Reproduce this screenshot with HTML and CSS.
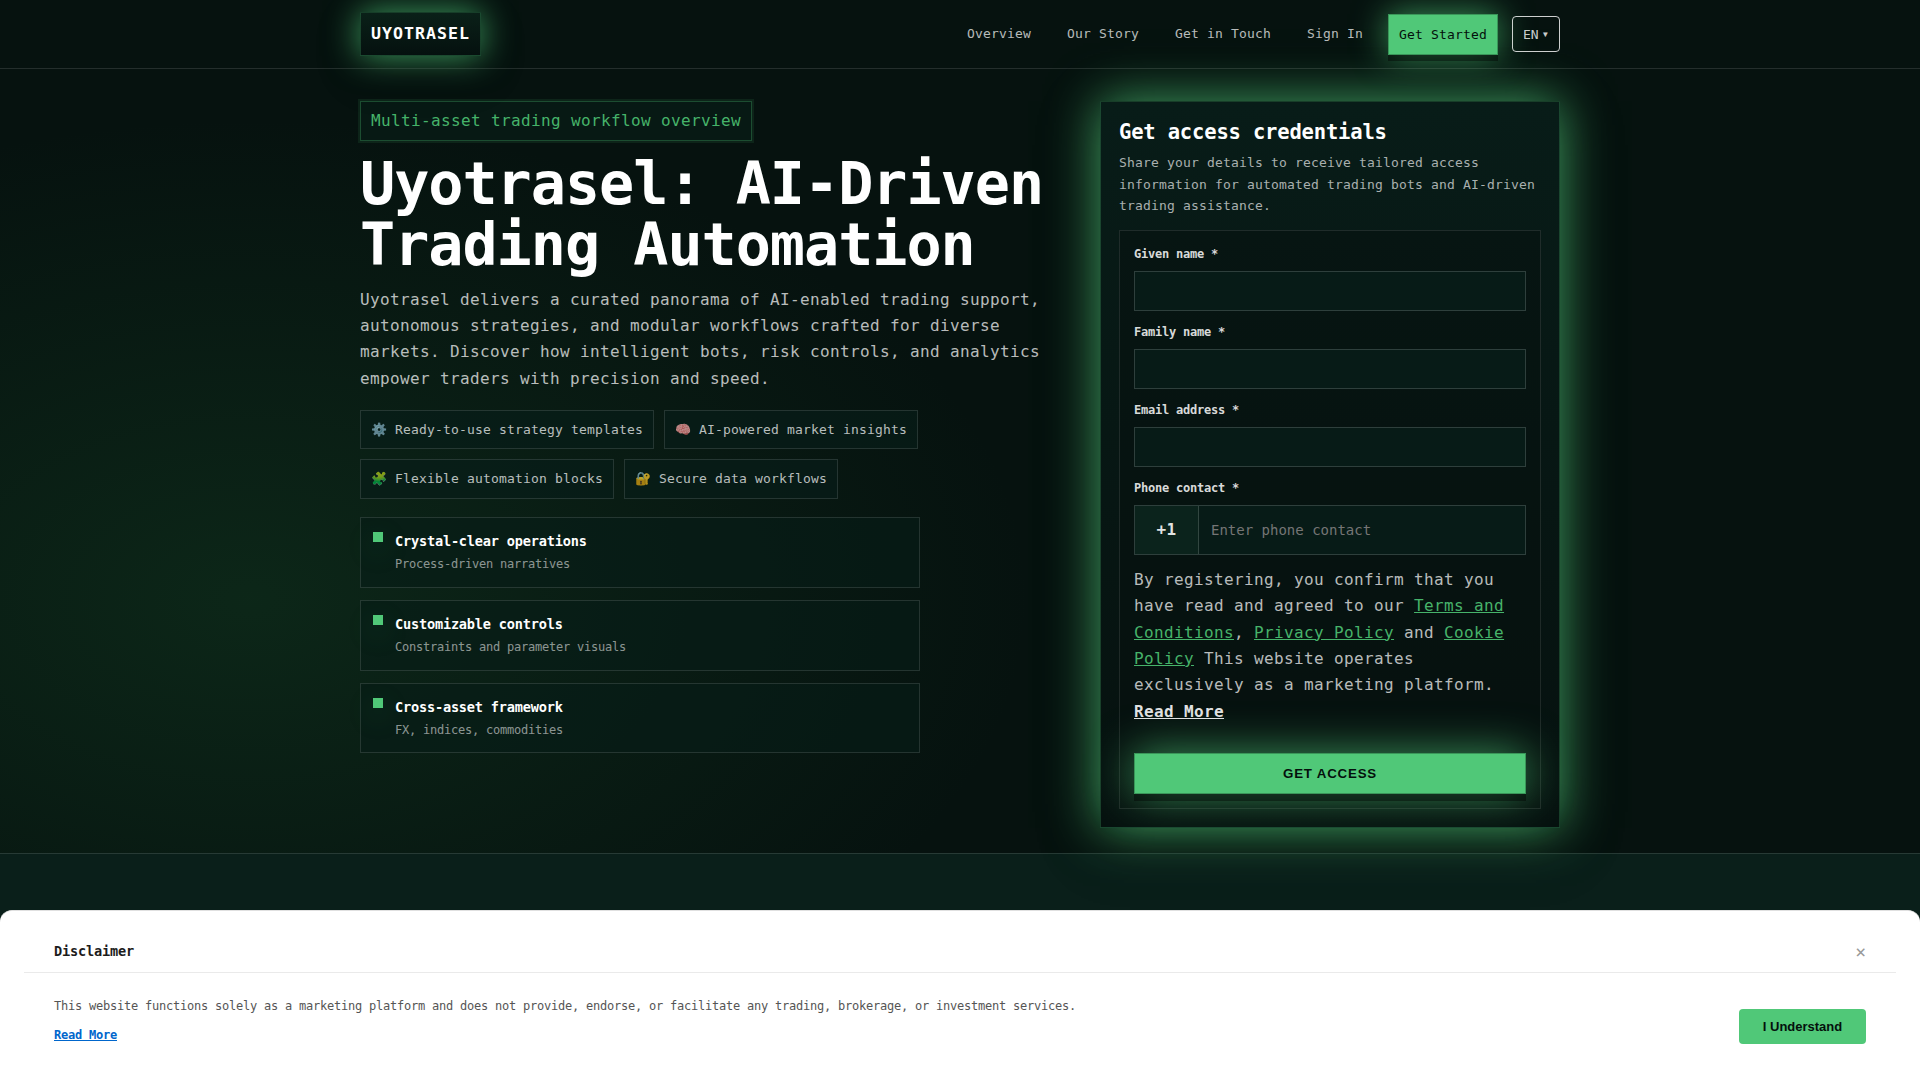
FILE: index.html
```html
<!DOCTYPE html>
<html lang="en">
<head>
    <meta charset="UTF-8">
    <meta name="viewport" content="width=device-width, initial-scale=1.0">
    <title>Uyotrasel</title>
    <link rel="stylesheet" href="styles.css">
</head>

<body>
    <header class="site-header">
        <div class="container header-inner">
            <a class="logo" href="#">UYOTRASEL</a>
            <nav class="nav">
                <a class="nav-link" href="#">Overview</a>
                <a class="nav-link" href="#">Our Story</a>
                <a class="nav-link" href="#">Get in Touch</a>
                <a class="nav-link" href="#">Sign In</a>
                <a class="nav-cta" href="#">Get Started</a>
                <button class="lang-btn" type="button">EN<span class="lang-arrow">▾</span></button>
            </nav>
        </div>
    </header>

    <section class="hero">
        <div class="container hero-grid">
            <div class="hero-copy">
                <div class="eyebrow">Multi-asset trading workflow overview</div>
                <h1 class="hero-title">Uyotrasel: AI-Driven Trading Automation</h1>
                <p class="hero-text">Uyotrasel delivers a curated panorama of AI-enabled trading support, autonomous strategies, and modular workflows crafted for diverse markets. Discover how intelligent bots, risk controls, and analytics empower traders with precision and speed.</p>

                <div class="pills">
                    <div class="pill"><span class="pill-icon">⚙️</span>Ready-to-use strategy templates</div>
                    <div class="pill"><span class="pill-icon">🧠</span>AI-powered market insights</div>
                    <div class="pill"><span class="pill-icon">🧩</span>Flexible automation blocks</div>
                    <div class="pill"><span class="pill-icon">🔐</span>Secure data workflows</div>
                </div>

                <div class="features">
                    <div class="feature">
                        <span class="feature-mark"></span>
                        <div>
                            <div class="feature-title">Crystal-clear operations</div>
                            <div class="feature-text">Process-driven narratives</div>
                        </div>
                    </div>
                    <div class="feature">
                        <span class="feature-mark"></span>
                        <div>
                            <div class="feature-title">Customizable controls</div>
                            <div class="feature-text">Constraints and parameter visuals</div>
                        </div>
                    </div>
                    <div class="feature">
                        <span class="feature-mark"></span>
                        <div>
                            <div class="feature-title">Cross-asset framework</div>
                            <div class="feature-text">FX, indices, commodities</div>
                        </div>
                    </div>
                </div>
            </div>

            <aside class="panel">
                <h2 class="panel-title">Get access credentials</h2>
                <p class="panel-text">Share your details to receive tailored access information for automated trading bots and AI-driven trading assistance.</p>
                <form class="form">
                    <label class="label" for="firstName">Given name *</label>
                    <input class="input" type="text" id="firstName">
                    <label class="label" for="lastName">Family name *</label>
                    <input class="input" type="text" id="lastName">
                    <label class="label" for="email">Email address *</label>
                    <input class="input" type="email" id="email">
                    <label class="label" for="phone">Phone contact *</label>
                    <div class="phone">
                        <span class="phone-code">+1</span>
                        <input class="phone-input" type="tel" id="phone" placeholder="Enter phone contact">
                    </div>
                    <p class="consent">By registering, you confirm that you have read and agreed to our <a href="#">Terms and Conditions</a>, <a href="#">Privacy Policy</a> and <a href="#">Cookie Policy</a> This website operates exclusively as a marketing platform. <a class="more" href="#">Read More</a></p>
                    <button class="submit-btn" type="button">GET ACCESS</button>
                </form>
            </aside>
        </div>
    </section>

    <section class="next-section"></section>

    <div class="disclaimer">
        <div class="disclaimer-head">
            <div class="disclaimer-title">Disclaimer</div>
            <button class="disclaimer-close" type="button">×</button>
        </div>
        <div class="disclaimer-body">
            <div>
                <p class="disclaimer-text">This website functions solely as a marketing platform and does not provide, endorse, or facilitate any trading, brokerage, or investment services.</p>
                <a class="disclaimer-more" href="#">Read More</a>
            </div>
            <button class="disclaimer-btn" type="button">I Understand</button>
        </div>
    </div>
</body>
</html>
```
FILE: styles.css
```css
:root {
    --green: #50c878;
    --line: rgba(255, 255, 255, 0.12);
    --mono: "DejaVu Sans Mono", "Liberation Mono", monospace;
}

* {
    margin: 0;
    padding: 0;
    box-sizing: border-box;
}

body {
    height: 1080px;
    overflow: hidden;
    font-family: var(--mono);
    font-size: 16px;
    line-height: 1.65;
    letter-spacing: 0.368px;
    color: #fff;
    background: #06120f;
}

.container {
    width: 1200px;
    margin: 0 auto;
}

/* header */
.site-header {
    position: relative;
    z-index: 1;
    height: 69px;
    border-bottom: 1px solid var(--line);
}

.header-inner {
    height: 68px;
    display: flex;
    align-items: center;
    justify-content: space-between;
}

.logo {
    height: 44px;
    padding: 0 10px;
    border: 1px solid rgba(80, 200, 120, 0.25);
    background: linear-gradient(180deg, #0a2018, #05110f);
    box-shadow: 0 0 34px rgba(80, 200, 120, 0.78), 0 14px 50px rgba(0, 0, 0, 0.2);
    color: #fff;
    font-size: 16.6px;
    font-weight: 700;
    line-height: 42px;
    letter-spacing: 1px;
    text-decoration: none;
}

.nav {
    display: flex;
    align-items: center;
}

.nav-link {
    margin-right: 16px;
    padding: 0 10px;
    color: rgba(255, 255, 255, 0.72);
    font-size: 13px;
    letter-spacing: 0.174px;
    text-decoration: none;
}

.nav-cta {
    height: 41px;
    margin-right: 14px;
    margin-left: -1px;
    padding: 0 10px;
    border: 1px solid #3a9659;
    background: var(--green);
    box-shadow: 0 6px 0 rgba(0, 0, 0, 0.4), 0 0 34px rgba(80, 200, 120, 0.72);
    color: #04100c;
    font-size: 13px;
    line-height: 39px;
    letter-spacing: 0.174px;
    text-decoration: none;
}

.lang-btn {
    display: flex;
    align-items: center;
    justify-content: center;
    gap: 3px;
    width: 48px;
    height: 36px;
    border: 1px solid rgba(255, 255, 255, 0.8);
    border-radius: 4px;
    background: transparent;
    color: rgba(255, 255, 255, 0.8);
    font-family: var(--mono);
    font-size: 13px;
}

.lang-arrow {
    font-size: 12px;
}

/* hero */
.hero {
    height: 784px;
    padding-top: 32px;
    background: radial-gradient(ellipse 780px 480px at 250px 530px, rgba(28, 92, 48, 0.28), transparent);
}

.hero-grid {
    display: grid;
    grid-template-columns: 699px 460px;
    justify-content: space-between;
    align-items: start;
}

.eyebrow {
    width: max-content;
    height: 40px;
    padding: 0 10px;
    border: 1px solid rgba(80, 200, 120, 0.3);
    background: #071914;
    box-shadow: 0 0 0 2px rgba(80, 200, 120, 0.1);
    color: #46b36a;
    line-height: 37px;
}

.hero-title {
    margin-top: 13px;
    font-size: 58.4px;
    line-height: 61.3px;
    letter-spacing: -1px;
}

.hero-text {
    margin-top: 10px;
    color: rgba(255, 255, 255, 0.72);
}

.pills {
    display: flex;
    flex-wrap: wrap;
    gap: 10px;
    width: 570px;
    margin-top: 17.8px;
}

.pill {
    display: flex;
    align-items: center;
    gap: 8px;
    height: 39.4px;
    padding: 0 10px;
    border: 1px solid var(--line);
    background: rgba(7, 28, 24, 0.7);
    color: rgba(255, 255, 255, 0.72);
    font-size: 13px;
    letter-spacing: 0.174px;
}

.pill-icon {
    width: 16px;
}

.features {
    display: grid;
    gap: 12px;
    width: 560px;
    margin-top: 18.2px;
}

.feature {
    display: flex;
    gap: 12px;
    height: 70.8px;
    padding: 12px;
    border: 1px solid var(--line);
    background: rgba(7, 28, 24, 0.6);
}

.feature-mark {
    width: 10px;
    height: 10px;
    margin-top: 2px;
    background: var(--green);
    box-shadow: 0 8px 28px rgba(80, 200, 120, 0.25);
}

.feature-title {
    font-size: 13.6px;
    font-weight: 700;
    line-height: 23px;
    letter-spacing: -0.2px;
}

.feature-text {
    margin-top: 1px;
    color: rgba(255, 255, 255, 0.55);
    font-size: 12px;
    line-height: 20px;
    letter-spacing: -0.224px;
}

/* form panel */
.panel {
    height: 727px;
    padding: 18px 18px 0;
    border: 1px solid rgba(80, 200, 120, 0.25);
    background: linear-gradient(180deg, #081c18, #06110f);
    box-shadow: 0 0 48px rgba(80, 200, 120, 0.8), 0 14px 60px rgba(0, 0, 0, 0.25);
}

.panel-title {
    font-size: 20.5px;
    line-height: 25px;
    letter-spacing: -0.17px;
}

.panel-text {
    margin-top: 7px;
    color: rgba(255, 255, 255, 0.66);
    font-size: 13px;
    line-height: 21.6px;
    letter-spacing: 0.174px;
}

.form {
    height: 579px;
    margin-top: 13px;
    padding: 14px;
    border: 1px solid rgba(255, 255, 255, 0.1);
    background: rgba(5, 15, 13, 0.5);
}

.label {
    display: block;
    height: 26px;
    color: rgba(255, 255, 255, 0.86);
    font-size: 12px;
    font-weight: 700;
    line-height: 18px;
    letter-spacing: -0.224px;
}

.input {
    display: block;
    width: 100%;
    height: 40px;
    margin-bottom: 12px;
    border: 1px solid rgba(255, 255, 255, 0.16);
    background: #071b17;
    color: #fff;
}

.phone {
    display: flex;
    height: 50px;
    border: 1px solid rgba(255, 255, 255, 0.16);
    background: #071b17;
}

.phone-code {
    width: 64px;
    border-right: 1px solid rgba(255, 255, 255, 0.16);
    background: #0b231c;
    color: rgba(255, 255, 255, 0.88);
    font-weight: 700;
    line-height: 47px;
    text-align: center;
}

.phone-input {
    flex: 1;
    min-width: 0;
    padding: 0 12px;
    border: none;
    background: transparent;
    color: #fff;
    font-family: var(--mono);
    font-size: 14px;
}

.phone-input::placeholder {
    color: #757575;
}

.consent {
    margin-top: 12px;
    color: rgba(255, 255, 255, 0.72);
}

.consent a {
    color: #46b36a;
}

.consent .more {
    color: rgba(255, 255, 255, 0.88);
    font-weight: 700;
}

.submit-btn {
    display: block;
    width: 100%;
    height: 41px;
    margin-top: 27.6px;
    border: 1px solid #3a9659;
    background: var(--green);
    box-shadow: 0 7px 0 rgba(0, 0, 0, 0.4), 0 0 44px rgba(80, 200, 120, 0.72);
    color: #04100c;
    font-family: "Liberation Sans", Arial, sans-serif;
    font-size: 13.3px;
    font-weight: 700;
    letter-spacing: 0.8px;
}

.next-section {
    height: 227px;
    border-top: 1px solid var(--line);
    background: #0a1f1a;
}

/* disclaimer bar */
.disclaimer {
    position: fixed;
    right: 0;
    bottom: 0;
    left: 0;
    z-index: 10;
    height: 170px;
    padding: 0 24px;
    border-top: 1px solid #e0e0e0;
    border-radius: 12px 12px 0 0;
    background: #fff;
}

.disclaimer-head {
    display: flex;
    align-items: center;
    justify-content: space-between;
    height: 62px;
    padding: 20px 30px 0;
    border-bottom: 1px solid #eaeaea;
}

.disclaimer-title {
    color: #1c1c1c;
    font-size: 13.6px;
    font-weight: 700;
    letter-spacing: -0.187px;
}

.disclaimer-close {
    border: none;
    background: none;
    color: #999;
    font-family: var(--mono);
    font-size: 18px;
}

.disclaimer-body {
    display: flex;
    justify-content: space-between;
    padding: 23px 30px 0;
}

.disclaimer-text {
    color: #555;
    font-size: 12px;
    line-height: 20px;
    letter-spacing: -0.224px;
}

.disclaimer-more {
    display: inline-block;
    margin-top: 9px;
    color: #06c;
    font-size: 12px;
    font-weight: 700;
    line-height: 20px;
    letter-spacing: -0.224px;
}

.disclaimer-btn {
    width: 127px;
    height: 35px;
    margin-top: 13px;
    border: none;
    border-radius: 4px;
    background: var(--green);
    color: #04100c;
    font-family: "Liberation Sans", Arial, sans-serif;
    font-size: 13px;
    font-weight: 700;
}
```
